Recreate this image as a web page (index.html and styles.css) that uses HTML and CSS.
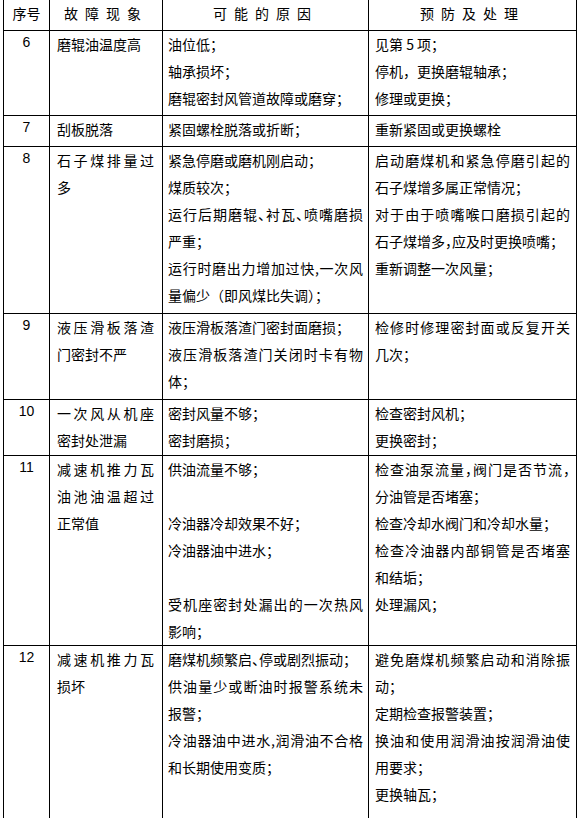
FILE: index.html
```html
<!DOCTYPE html>
<html lang="zh-CN">
<head>
<meta charset="utf-8">
<title>故障现象及处理</title>
<link rel="stylesheet" href="styles.css">
</head>
<body>
<table class="fault-table">
  <colgroup>
    <col class="c-no">
    <col class="c-sym">
    <col class="c-cause">
    <col class="c-fix">
  </colgroup>
  <thead>
    <tr>
      <th class="h-no">序号</th>
      <th class="h-wide">故障现象</th>
      <th class="h-wide">可能的原因</th>
      <th class="h-wide">预防及处理</th>
    </tr>
  </thead>
  <tbody>
    <tr class="r6">
      <td class="no">6</td>
      <td class="txt sym"><p>磨辊油温度高</p></td>
      <td class="txt cause"><p>油位低；</p><p>轴承损坏；</p><p>磨辊密封风管道故障或磨穿；</p></td>
      <td class="txt fix"><p>见第 5 项；</p><p>停机，更换磨辊轴承；</p><p>修理或更换；</p></td>
    </tr>
    <tr class="r7">
      <td class="no">7</td>
      <td class="txt sym"><p>刮板脱落</p></td>
      <td class="txt cause"><p>紧固螺栓脱落或折断；</p></td>
      <td class="txt fix"><p>重新紧固或更换螺栓</p></td>
    </tr>
    <tr class="r8">
      <td class="no">8</td>
      <td class="txt sym"><p>石子煤排量过多</p></td>
      <td class="txt cause"><p>紧急停磨或磨机刚启动；</p><p>煤质较次；</p><p class="tight">运行后期磨辊、衬瓦、喷嘴磨损严重；</p><p>运行时磨出力增加过快,一次风量偏少（即风煤比失调）；</p></td>
      <td class="txt fix"><p>启动磨煤机和紧急停磨引起的石子煤增多属正常情况；</p><p class="tight">对于由于喷嘴喉口磨损引起的石子煤增多，应及时更换喷嘴；</p><p>重新调整一次风量；</p></td>
    </tr>
    <tr class="r9">
      <td class="no">9</td>
      <td class="txt sym"><p>液压滑板落渣门密封不严</p></td>
      <td class="txt cause"><p>液压滑板落渣门密封面磨损；</p><p>液压滑板落渣门关闭时卡有物体；</p></td>
      <td class="txt fix"><p>检修时修理密封面或反复开关几次；</p></td>
    </tr>
    <tr class="r10">
      <td class="no">10</td>
      <td class="txt sym"><p>一次风从机座密封处泄漏</p></td>
      <td class="txt cause"><p>密封风量不够；</p><p>密封磨损；</p></td>
      <td class="txt fix"><p>检查密封风机；</p><p>更换密封；</p></td>
    </tr>
    <tr class="r11">
      <td class="no">11</td>
      <td class="txt sym"><p>减速机推力瓦油池油温超过正常值</p></td>
      <td class="txt cause"><p>供油流量不够；</p><p class="blank"></p><p>冷油器冷却效果不好；</p><p>冷油器油中进水；</p><p class="blank"></p><p>受机座密封处漏出的一次热风影响；</p></td>
      <td class="txt fix"><p class="tight">检查油泵流量，阀门是否节流，分油管是否堵塞；</p><p>检查冷却水阀门和冷却水量；</p><p>检查冷油器内部铜管是否堵塞和结垢；</p><p>处理漏风；</p></td>
    </tr>
    <tr class="r12">
      <td class="no">12</td>
      <td class="txt sym"><p>减速机推力瓦损坏</p></td>
      <td class="txt cause"><p class="tight">磨煤机频繁启、停或剧烈振动；</p><p>供油量少或断油时报警系统未报警；</p><p>冷油器油中进水,润滑油不合格和长期使用变质；</p></td>
      <td class="txt fix"><p>避免磨煤机频繁启动和消除振动；</p><p>定期检查报警装置；</p><p>换油和使用润滑油按润滑油使用要求；</p><p>更换轴瓦；</p></td>
    </tr>
  </tbody>
</table>
</body>
</html>
```

FILE: styles.css
```css
html, body {
  margin: 0;
  padding: 0;
  background: #fff;
}

body {
  padding-left: 3px;
  color: #000;
  font-family: "Noto Sans CJK SC", "Noto Sans", sans-serif;
  font-size: 14px;
}

.fault-table {
  border-collapse: collapse;
  table-layout: fixed;
  width: 573px;
}

.c-no { width: 46px; }
.c-sym { width: 113px; }
.c-cause { width: 206px; }
.c-fix { width: 208px; }

.fault-table th,
.fault-table td {
  border: 1px solid #000;
  vertical-align: top;
}

.fault-table thead th {
  border-top: none;
  font-weight: normal;
  height: 30px;
  padding: 0;
  line-height: 27px;
  text-align: center;
  vertical-align: top;
}

.h-wide {
  letter-spacing: 7px;
}

.no {
  font-family: "Liberation Sans", Arial, sans-serif;
  font-size: 14px;
  text-align: center;
  line-height: 22px;
  padding: 0;
}

.txt {
  line-height: 27px;
  text-align: justify;
  padding: 0 5px 3px 5px;
}

.sym { padding-left: 7px; padding-right: 8px; }
.cause { padding-left: 5px; padding-right: 5px; }
.fix { padding-left: 6px; padding-right: 6px; }

.r8 .txt,
.r9 .txt { padding-bottom: 4px; }
.r10 .txt { padding-bottom: 1px; }
.r11 .txt { padding-bottom: 0; }
.r12 .txt { padding-bottom: 10px; }

.txt p {
  margin: 0;
}

.txt p.blank {
  height: 27px;
}

.txt p.tight {
  font-feature-settings: "halt" 1;
}
```
